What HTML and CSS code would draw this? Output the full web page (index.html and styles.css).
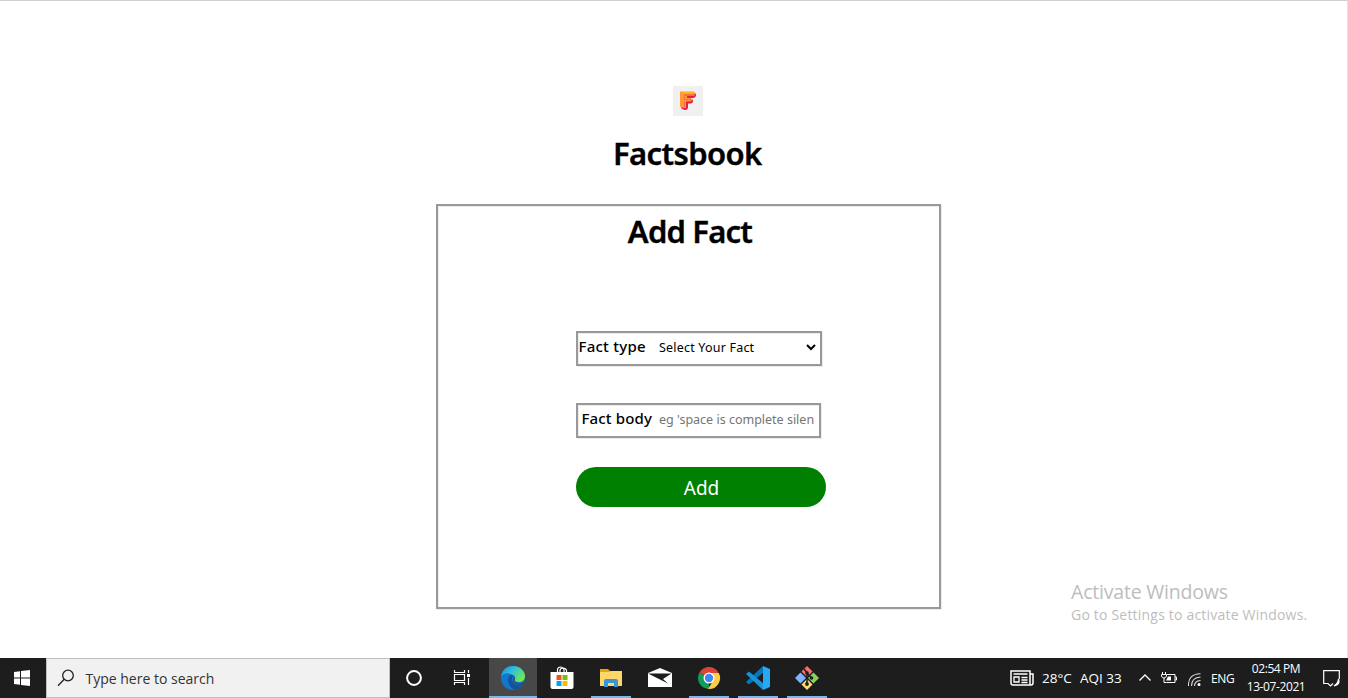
FILE: index.html
```html
<!DOCTYPE html>
<html lang="en">
<head>
<meta charset="utf-8">
<title>Factsbook</title>
<link rel="stylesheet" href="styles.css">
</head>
<body>
<main class="page">
  <header class="brand">
    <svg class="logo" viewBox="0 0 30 30"><rect width="30" height="30" fill="#f0f0f0"/><path d="M8.500 6.500H20q3 0 3 2.500t-3 3h-2v1q2 0 2 2t-2 2.500h-3v3.500q0 3-3 3-4-1-4-3z" fill="#e51f45"/><path d="M7 5.500h13q2 0 2 2T20 10h-6v2h3q2 0 2 1.500t-2 2h-4V22q-5 0-6-2z" fill="#ff9838"/><path d="M8 6h12l1 2h-9z" fill="#ffb31c"/><path d="M20.500 9.500H11.500v4H18M11.500 15.500V22M11 8.500h10" fill="none" stroke="#f5703e"/></svg>
    <h1 class="title brand-title">Factsbook</h1>
  </header>
  <section class="card">
    <h2 class="title card-title">Add Fact</h2>
    <form class="form">
      <label class="field field-type"><span class="label label-type">Fact type</span><span class="value value-type">Select Your Fact</span><svg class="chevron" viewBox="0 0 12 8"><path d="M2 2l4 4 4-4" fill="none" stroke="#000" stroke-width="2"/></svg></label>
      <label class="field field-body"><span class="label label-body">Fact body</span><span class="value value-body">eg 'space is complete silen</span></label>
      <button class="add" type="button"><span>Add</span></button>
    </form>
  </section>
  <aside class="watermark"><p class="wm-title">Activate Windows</p><p class="wm-text">Go to Settings to activate Windows.</p></aside>
</main>
<footer class="taskbar">
  <div class="start"><svg width="16" height="16" viewBox="0 0 16 16" fill="#fff"><path d="M0 2l6-.8V7.500H0zM7 1l9-1v7.500H7zM0 8.500h6v6.300L0 14zM7 8.500h9V16l-9-1z"/></svg></div>
  <div class="search"><svg width="18" height="18" viewBox="0 0 18 18" fill="none" stroke="#222" stroke-width="1.3"><circle cx="11" cy="6.500" r="5.300"/><path d="M7.200 10.300L1 16.700"/></svg><span>Type here to search</span></div>
  <nav class="apps">
    <div class="app"><svg viewBox="0 0 24 24"><circle cx="12" cy="12" r="6.900" fill="none" stroke="#fff" stroke-width="2"/></svg></div>
    <div class="app taskview"><svg viewBox="0 0 24 24" fill="none" stroke="#fff" stroke-width="1.200"><path d="M4.500 4v2.500h10V4M4.500 19v-2.500h10V19M4.500 8.500h10v6h-10zM18.500 4v3M18.500 12v7"/><path d="M17 8h3v3h-3z" fill="#fff" stroke="none"/></svg></div>
    <div class="app active"><svg viewBox="0 0 24 24"><defs><linearGradient id="edge" x1="0" y1="0" x2="1" y2=".6"><stop stop-color="#178cd1"/><stop offset=".45" stop-color="#30bce0"/><stop offset="1" stop-color="#6eea50"/></linearGradient></defs><circle cx="12" cy="12" r="12" fill="#1278cf"/><path d="M0 11C1 4 6 0 12 0c7 0 12 5 12 10 0 4-3 6-6 6-3 0-5-1-4.500-2 2-3 0-5-3-5.500C6 6 1 8 0 11z" fill="url(#edge)"/><path d="M10.500 8.500C5 10 6 20 13 23.800 18 24 22 20 23 17.500c-6 3.500-12 0-12-4.500 0-2 1-3 1.500-3.500z" fill="#1254a0"/><path d="M13.500 14c1 3.500 5 4 9.700 2l.8-2.500V18l-1-.5c-4 2.500-10.500 1-11-4 0-1.500.7-2.500 1.500-2.500.7 1 .6 2 0 3z" fill="#484848"/></svg></div>
    <div class="app"><svg viewBox="0 0 24 24"><path d="M7.500 7V3.500Q8 1 10.500 1T14 3.500V7M10 7V4q.5-2 3-2t3.500 2v3" fill="none" stroke="#fff" stroke-width="1.200"/><path d="M.5 6h23v15q0 2-2 2h-19q-2 0-2-2z" fill="#fff"/><path d="M6.500 9h5v5h-5z" fill="#f25022"/><path d="M12.500 9h5v5h-5z" fill="#7fba00"/><path d="M6.500 15h5v5h-5z" fill="#00a4ef"/><path d="M12.500 15h5v5h-5z" fill="#ffb900"/></svg></div>
    <div class="app running"><svg viewBox="0 0 24 24"><path d="M1 3h8l2 2h12v5H1z" fill="#e5a50b"/><path d="M1 6h9l2-1h11v15H1z" fill="#ffd768"/><path d="M5 21v-6q0-2 2-2h10q2 0 2 2v6h-4v-4H9v4z" fill="#3994d8"/></svg></div>
    <div class="app"><svg viewBox="0 0 24 24"><path d="M0 7l12-5 12 5v14H0z" fill="#fff"/><path d="M0 7.500h23.500L15 13l5 4.500z" fill="#1d1d1d"/></svg></div>
    <div class="app running"><svg viewBox="0 0 24 24"><path d="M12 12L2.500 6.500A11 11 0 0 1 21.500 6.500z" fill="#db4437"/><path d="M12 12L12 23A11 11 0 0 1 2.500 6.500z" fill="#109d58"/><path d="M12 7h9.800A11 11 0 0 1 11 23l5.300-8.500z" fill="#ffcd42"/><circle cx="12" cy="12" r="5.500" fill="#fff"/><circle cx="12" cy="12" r="4.200" fill="#4285f4"/></svg></div>
    <div class="app running"><svg viewBox="0 0 24 24"><path d="M17 0l1 6L3 18.500 0 16z" fill="#0877b9"/><path d="M0 8l3-2.500L18 18l-1 6z" fill="#1295db"/><path d="M17 0l7 3v18l-7 3z" fill="#27a8f2"/></svg></div>
    <div class="app running"><svg viewBox="0 0 24 24"><path d="M12 0l5.500 5.500L12 11 6.500 5.500z" fill="#ff6c6c"/><path d="M5.500 6.500L11 12l-5.500 5.500L0 12z" fill="#80b3ff"/><path d="M18.500 6.500L24 12l-5.500 5.500L13 12z" fill="#87d25b"/><path d="M12 13l5.500 5.500L12 24l-5.500-5.500z" fill="#ffdc73"/><path d="M9 3l3 3.500V18M12 7l4.500 5" fill="none" stroke="#1d1d1d" stroke-width="1.500"/><g fill="#1d1d1d"><circle cx="12" cy="7" r="1.800"/><circle cx="12" cy="18" r="1.900"/><circle cx="16.500" cy="12" r="1.800"/></g></svg></div>
  </nav>
  <div class="tray">
    <svg class="news" viewBox="0 0 24 16" fill="none" stroke="#fff" stroke-width="1.500"><path d="M1 1h19v14H3q-2 0-2-2zM20 4h3v9q0 2-2 2h-2M3.500 4h14"/><path d="M4 7h5v5H4zM11.500 7.500h6M11.500 10h6M11.500 12.500h6" stroke-width="1.300"/></svg>
    <span class="weather">28°C</span><span class="aqi">AQI 33</span>
    <svg class="caret" viewBox="0 0 12 8" fill="none" stroke="#fff" stroke-width="1.300"><path d="M.5 6.500L6 1l5.500 5.500"/></svg>
    <svg class="battery" viewBox="0 0 16 12" fill="none" stroke="#fff"><path d="M6 2.500h8v8H5.500M14 5h1.500v3H14M1.500 0v2M4.500 0v2M.5 2.500h5V4Q5 6 3 6T.5 4zM3 6v4.500h2.500"/><path d="M7 4.500h3v4H5z" fill="#fff" stroke="none"/></svg>
    <svg class="wifi" viewBox="0 0 13 13" fill="none" stroke="#ddd"><path d="M.5 13Q0 1 12.500.7M3.500 13Q3.500 4.500 12.500 4M6.500 13q0-5 6-5.500" stroke-width="1.100"/><circle cx="11" cy="11.500" r="1.500" fill="#fff" stroke="none"/></svg>
    <span class="lang">ENG</span>
    <div class="clock"><span class="time">02:54 PM</span><span class="date">13-07-2021</span></div>
    <svg class="notice" viewBox="0 0 17 17" fill="none" stroke="#fff" stroke-width="1.200"><path d="M10 13.500L7.500 16 5 13.500H.7V.7h15.600V9"/><path d="M15.500 9q2 6-4.500 6.800 4-2 4.500-6.800z" fill="#fff"/></svg>
  </div>
</footer>
</body>
</html>
```
FILE: styles.css
```css
* { box-sizing: border-box; }
body { margin: 0; width: 1348px; height: 698px; overflow: hidden; background: #fff; font-family: "Noto Sans", sans-serif; color: #000; }
svg { display: block; flex: none; }
span, p, h1, h2 { white-space: nowrap; }
.page { position: relative; height: 658px; padding: 85px 0 0 29px; border-top: 1px solid #cfcfcf; border-right: 1px solid #e5e5e5; display: flex; flex-direction: column; align-items: center; }
.brand { display: flex; flex-direction: column; align-items: flex-start; width: 151px; height: 118px; }
.logo { width: 30px; height: 30px; margin-left: 60px; }
.title { margin: 0; font-size: 31px; font-weight: 600; line-height: 42px; -webkit-text-stroke: .4px #000; }
.brand-title { margin-top: 16px; margin-left: .5px; letter-spacing: -.6px; }
.card { width: 505px; height: 405px; border: 2px solid #999; box-shadow: inset 1px 1px #ededed, 1px 1px #ededed; padding-top: 4px; display: flex; flex-direction: column; }
.card-title { text-align: center; padding-left: 4px; letter-spacing: -.8px; }
.form { margin: 79px 0 0 138px; display: flex; flex-direction: column; align-items: flex-start; }
.field { display: flex; height: 35px; border: 2px solid #999; box-shadow: inset 1px 1px #ededed, 1px 1px #ededed; line-height: 26px; }
.field-type { width: 246px; padding-left: 1px; }
.field-body { width: 245px; padding-left: 4px; margin-top: 37px; }
.label { font-size: 15px; font-weight: 500; letter-spacing: .15px; }
.label-type { width: 80.5px; letter-spacing: .25px; }
.label-body { width: 77.5px; }
.value { font-size: 12.5px; line-height: 29px; }
.value-type { width: 145.5px; letter-spacing: .2px; }
.value-body { color: #757575; }
.chevron { width: 12px; height: 8px; margin-top: 10px; }
.add { width: 250px; height: 40px; margin-top: 29px; padding: 1px 0 0 2px; border: 0; border-radius: 20px; background: #008000; color: #fff; font: 19px/40px "Noto Sans", sans-serif; }
.watermark { position: absolute; left: 1071px; top: 578px; color: #bdbdbd; font-family: "Open Sans", sans-serif; }
.watermark p { margin: 0; }
.wm-title { font-size: 19.5px; line-height: 26px; letter-spacing: -.2px; }
.wm-text { font-size: 14px; line-height: 20px; letter-spacing: .2px; }
.taskbar { height: 40px; display: flex; background: #1d1d1d; color: #fff; font-family: "Open Sans", sans-serif; }
.start { width: 46px; display: flex; align-items: center; padding-left: 14px; }
.search { width: 344px; display: flex; align-items: center; padding-left: 10px; gap: 10.500px; background: #f1f1f1; border: 1px solid #bfbfbf; color: #333; font-size: 14px; }
.apps { display: flex; }
.app { width: 49px; display: flex; align-items: center; justify-content: center; border-bottom: 2px solid transparent; padding-top: 2px; }
.app:first-child { width: 48px; }
.app svg { width: 24px; height: 24px; }
.taskview { width: 51px; padding-right: 4px; }
.active { width: 48px; background: #484848; border-color: #76b9ed; }
.running { background: linear-gradient(#76b9ed, #76b9ed) center bottom / 40px 2px no-repeat border-box; }
.tray { margin-left: auto; width: 338px; display: flex; align-items: center; font-size: 13.5px; }
.news { width: 24px; height: 16px; }
.weather { width: 38px; margin-left: 8px; }
.aqi { width: 59px; }
.caret { width: 12px; height: 8px; }
.battery { width: 16px; height: 12px; margin-left: 10px; }
.wifi { width: 13px; height: 13px; margin-left: 11px; margin-top: 3px; }
.lang { width: 35px; margin-left: 10px; font-size: 12px; letter-spacing: -.3px; }
.clock { width: 60px; display: flex; flex-direction: column; align-items: center; line-height: 18px; font-size: 12px; letter-spacing: -.4px; }
.notice { width: 17px; height: 17px; margin-left: 17px; }
```
